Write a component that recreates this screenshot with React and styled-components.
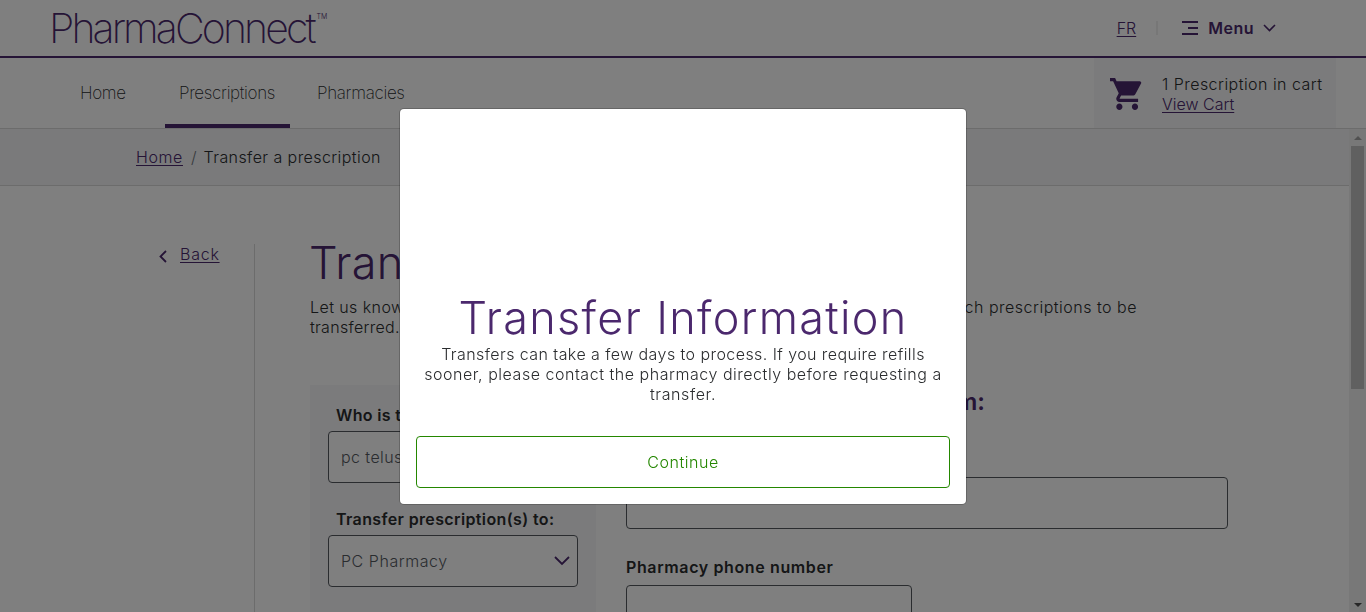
import React from "react";
import styled, { createGlobalStyle } from "styled-components";

const purple = "#4b286d";
const ink = "#2a2c2e";

const GlobalStyle = createGlobalStyle`
  *, *::before, *::after { box-sizing: border-box; }
  html, body { margin: 0; height: 100%; overflow: hidden; background: #fff; }
  body {
    font-family: Inter, "Liberation Sans", sans-serif;
    font-size: 16px;
    font-weight: 300;
    line-height: 20px;
    color: ${ink};
  }
  h1, h2, p { margin: 0; font-weight: 300; }
`;

const Page = styled.div`
  display: flex;
  flex-direction: column;
  width: 100%;
  height: 612px;
  overflow: hidden;
`;

const Header = styled.header`
  flex: none;
  display: flex;
  justify-content: space-between;
  height: 58px;
  padding: 0 90px 0 49px;
  border-bottom: 2px solid ${purple};
`;

const Logo = styled.div`
  display: flex;
  align-items: flex-start;
  color: ${purple};
`;

const LogoName = styled.span`
  font-size: 41px;
  font-weight: 200;
  line-height: 56px;
  letter-spacing: ${(p) => p.$track}px;
  white-space: nowrap;
`;

const TradeMark = styled.span`
  margin: 12px 0 0 3px;
  font-size: 7px;
  line-height: 10px;
`;

const Tools = styled.div`
  display: flex;
  align-items: center;
  color: ${purple};
  svg { display: block; }
`;

const Link = styled.a`
  color: ${purple};
  font-weight: 275;
  text-decoration: underline;
  text-decoration-thickness: 1px;
  text-underline-offset: 2px;
  letter-spacing: ${(p) => p.$track || 0}px;
  white-space: nowrap;
`;

const Separator = styled.span`
  width: 2px;
  height: 14px;
  margin: 0 24px 0 20px;
  background: #eee;
`;

const MenuLabel = styled.span`
  margin: 0 9px 0 10px;
  font-weight: 600;
  letter-spacing: 0.5px;
`;

const NavBar = styled.nav`
  flex: none;
  display: flex;
  justify-content: space-between;
  height: 71px;
  padding: 0 30px 0 66px;
  border-bottom: 1px solid #d8d8d8;
`;

const NavItems = styled.div`
  display: flex;
`;

const NavItem = styled.a`
  width: ${(p) => p.$width}px;
  margin-right: ${(p) => p.$gap || 0}px;
  padding: 0 14px;
  line-height: 70px;
  font-size: 17px;
  font-weight: 200;
  letter-spacing: -0.33px;
  white-space: nowrap;
  border-bottom: 4px solid ${(p) => (p.$active ? purple : "transparent")};
`;

const CartPanel = styled.div`
  display: flex;
  align-items: center;
  gap: 20px;
  width: 242px;
  height: 70px;
  padding: 1px 0 0 16px;
  background: #f7f7f8;
`;

const CartText = styled.div`
  display: flex;
  flex-direction: column;
  white-space: nowrap;
`;

const Body = styled.div`
  flex: 1;
  display: flex;
  min-height: 0;
`;

const Content = styled.div`
  flex: 1;
  min-width: 0;
  overflow: hidden;
`;

const Breadcrumb = styled.div`
  display: flex;
  align-items: center;
  gap: 8px;
  height: 57px;
  padding-left: 136px;
  background: #f4f4f7;
  border-bottom: 1px solid #d8d8d8;
`;

const Text = styled.span`
  font-weight: ${(p) => p.$weight || 300};
  letter-spacing: ${(p) => (p.$track === undefined ? 0.42 : p.$track)}px;
  white-space: nowrap;
`;

const Slash = styled.span`
  margin-right: -1px;
  color: #71757b;
`;

const Main = styled.main`
  display: flex;
  padding-top: 58px;
`;

const SideColumn = styled.aside`
  flex: none;
  display: flex;
  gap: 13px;
  align-items: flex-start;
  width: 255px;
  height: 500px;
  padding: 0 0 0 159px;
  border-right: 1px solid #d8d8d8;
  svg { margin-top: 6px; }
`;

const FormArea = styled.section`
  width: 918px;
  margin-left: 55px;
`;

const Title = styled.h1`
  color: ${purple};
  font-size: 45px;
  font-weight: 300;
  line-height: 52px;
  letter-spacing: ${(p) => p.$track}px;
  white-space: nowrap;
`;

const PageTitle = styled(Title)`
  margin: -7px 0 0 -1px;
`;

const Intro = styled.p`
  width: 827px;
  margin-top: 8px;
`;

const IntroLine = styled.span`
  display: flex;
  justify-content: space-between;
`;

const Columns = styled.div`
  display: flex;
  gap: 30px;
  margin-top: 48px;
`;

const Card = styled.div`
  flex: none;
  width: 286px;
  height: 400px;
  padding: 20px 18px;
  background: #f7f7f8;
`;

const Field = styled.div`
  margin-bottom: ${(p) => p.$below || 26}px;
`;

const Label = styled.label`
  display: block;
  padding-left: ${(p) => p.$indent || 0}px;
  margin-bottom: ${(p) => p.$space || 6}px;
  font-weight: 600;
  letter-spacing: ${(p) => p.$track || 0}px;
  white-space: nowrap;
`;

const Box = styled.div`
  display: flex;
  align-items: center;
  justify-content: space-between;
  width: ${(p) => p.$width}px;
  height: 52px;
  padding: 0 7px 0 12px;
  color: #54595f;
  background: #fff;
  border: 1px solid #54595f;
  border-radius: 4px;
`;

const Details = styled.div`
  padding-top: 2px;
`;

const SectionTitle = styled.h2`
  width: 359px;
  margin-bottom: 38px;
  color: ${purple};
  font-size: 24px;
  font-weight: 600;
  line-height: 30px;
  text-align: right;
  white-space: nowrap;
`;

const ScrollTrack = styled.div`
  flex: none;
  display: flex;
  flex-direction: column;
  align-items: center;
  width: 17px;
  padding: 7px 0 5px;
  background: #f1f1f1;
`;

const ScrollThumb = styled.div`
  width: 13px;
  height: 243px;
  margin: 6px 0 auto;
  background: #c1c1c1;
`;

const Overlay = styled.div`
  position: fixed;
  inset: 0;
  display: flex;
  justify-content: center;
  align-items: flex-start;
  padding-top: 109px;
  background: rgba(0, 0, 0, 0.5);
`;

const Dialog = styled.div`
  display: flex;
  flex-direction: column;
  align-items: center;
  width: 566px;
  height: 395px;
  padding: 183px 16px 16px;
  text-align: center;
  background: #fff;
  border-radius: 4px;
  box-shadow: 0 0 0 1px rgba(0, 0, 0, 0.2);
`;

const DialogText = styled.p`
  display: flex;
  flex-direction: column;
  align-items: center;
`;

const ContinueButton = styled.button`
  width: 100%;
  height: 52px;
  margin-top: auto;
  padding: 0;
  color: #248700;
  font: inherit;
  letter-spacing: 0.55px;
  background: #fff;
  border: 1px solid #248700;
  border-radius: 4px;
`;

const Chevron = ({ width, height, d, stroke = 1.6 }) => (
  <svg width={width} height={height} viewBox={`0 0 ${width} ${height}`} fill="none" stroke={purple} strokeWidth={stroke}>
    <path d={d} />
  </svg>
);

export default function App() {
  return (
    <>
      <GlobalStyle />
      <Page>
        <Header>
          <Logo>
            <LogoName $track={-2.9}>PharmaConnect</LogoName>
            <TradeMark>TM</TradeMark>
          </Logo>
          <Tools>
            <Link>FR</Link>
            <Separator />
            <svg width="16" height="14" viewBox="0 0 16 14" fill={purple}>
              <path d="M0 0h16v2H0zM6 6h10v2H6zM0 12h16v2H0z" />
            </svg>
            <MenuLabel>Menu</MenuLabel>
            <Chevron width={13} height={8} d="M1 1l5.500 5.500L12 1" />
          </Tools>
        </Header>
        <NavBar>
          <NavItems>
            <NavItem $width={73} $gap={26}>Home</NavItem>
            <NavItem $width={125} $gap={13} $active>Prescriptions</NavItem>
            <NavItem $width={116}>Pharmacies</NavItem>
          </NavItems>
          <CartPanel>
            <svg width="32" height="32" viewBox="1 2 20.500 20" preserveAspectRatio="none" fill={purple}>
              <path d="M7 18c-1.100 0-1.990.9-1.990 2S5.900 22 7 22s2-.9 2-2-.9-2-2-2zM1 2v2h2l3.600 7.590-1.350 2.450c-.16.280-.25.610-.25.960 0 1.100.9 2 2 2h12v-2H7.420c-.14 0-.25-.11-.25-.25l.03-.12.9-1.630h7.450c.75 0 1.410-.41 1.750-1.030l3.580-6.490A1 1 0 0 0 20 4H5.210l-.94-2H1zm16 16c-1.100 0-1.990.9-1.990 2s.89 2 1.990 2 2-.9 2-2-.9-2-2-2z" />
            </svg>
            <CartText>
              <Text $track={0.46} $weight={275}>1 Prescription in cart</Text>
              <Link>View Cart</Link>
            </CartText>
          </CartPanel>
        </NavBar>
        <Body>
          <Content>
            <Breadcrumb>
              <Link $track={0.6}>Home</Link>
              <Slash>/</Slash>
              <Text>Transfer a prescription</Text>
            </Breadcrumb>
            <Main>
              <SideColumn>
                <Chevron width={8} height={13} d="M7 1L1.500 6.500L7 12" stroke={1.8} />
                <Link $track={0.75}>Back</Link>
              </SideColumn>
              <FormArea>
                <PageTitle $track={0.3}>Transfer a prescription</PageTitle>
                <Intro>
                  <IntroLine>
                    <Text>Let us know the pharmacy to transfer</Text>
                    <Text $track={0.5}>and which prescriptions to be</Text>
                  </IntroLine>
                  <Text $track={0.3}>transferred.</Text>
                </Intro>
                <Columns>
                  <Card>
                    <Field>
                      <Label $indent={8} $track={0.35}>Who is this for?</Label>
                      <Box $width={250}><Text $weight={275}>pc telus</Text></Box>
                    </Field>
                    <Field>
                      <Label $indent={8} $track={0.37}>Transfer prescription(s) to:</Label>
                      <Box $width={250}>
                        <Text $weight={275} $track={0.55}>PC Pharmacy</Text>
                        <Chevron width={16} height={10} d="M1 1l7 7L15 1" stroke={1.8} />
                      </Box>
                    </Field>
                  </Card>
                  <Details>
                    <SectionTitle>Pharmacy to transfer from:</SectionTitle>
                    <Field $below={28}>
                      <Label $space={2}>Pharmacy name</Label>
                      <Box $width={602} />
                    </Field>
                    <Field>
                      <Label $space={8} $track={0.62}>Pharmacy phone number</Label>
                      <Box $width={286} />
                    </Field>
                  </Details>
                </Columns>
              </FormArea>
            </Main>
          </Content>
          <ScrollTrack>
            <svg width="8" height="4" viewBox="0 0 8 4" fill="#a3a3a3"><path d="M0 4L4 0L8 4z" /></svg>
            <ScrollThumb />
            <svg width="8" height="4" viewBox="0 0 8 4" fill="#505050"><path d="M0 0L4 4L8 0z" /></svg>
          </ScrollTrack>
        </Body>
      </Page>
      <Overlay>
        <Dialog role="dialog">
          <Title $track={1.3}>Transfer Information</Title>
          <DialogText>
            <Text $track={0.43}>Transfers can take a few days to process. If you require refills</Text>
            <Text $track={0.53}>sooner, please contact the pharmacy directly before requesting a</Text>
            <Text $track={0.6}>transfer.</Text>
          </DialogText>
          <ContinueButton>Continue</ContinueButton>
        </Dialog>
      </Overlay>
    </>
  );
}
